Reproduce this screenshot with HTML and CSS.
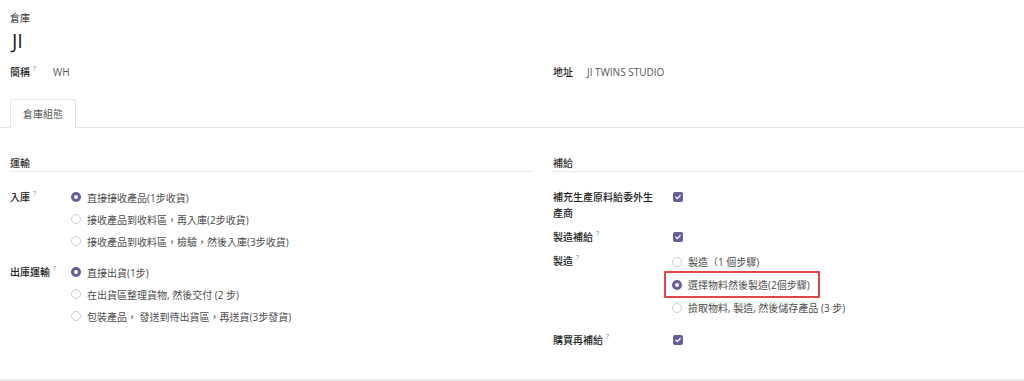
FILE: index.html
```html
<!DOCTYPE html>
<html lang="zh-Hant">
<head>
    <meta charset="UTF-8">
    <meta name="viewport" content="width=device-width, initial-scale=1.0">
    <title>倉庫 JI</title>
    <link rel="stylesheet" href="styles.css">
</head>
<body>
    <div class="sheet">
        <div class="title">
            <div class="title-label">倉庫</div>
            <h1>JI</h1>
        </div>

        <div class="cols top-fields">
            <div class="field short">
                <span class="label">簡稱<sup>?</sup></span>
                <span class="value">WH</span>
            </div>
            <div class="field address">
                <span class="label">地址</span>
                <span class="value">JI TWINS STUDIO</span>
            </div>
        </div>

        <div class="tabs">
            <div class="tab active">倉庫組態</div>
        </div>

        <div class="cols tab-body">
            <div class="group left">
                <div class="group-title">運輸</div>
                <div class="rows">
                    <div class="row">
                        <div class="label">入庫<sup>?</sup></div>
                        <div class="options">
                            <div class="option"><span class="radio checked"></span>直接接收產品(1步收貨)</div>
                            <div class="option"><span class="radio"></span>接收產品到收料區，再入庫(2步收貨)</div>
                            <div class="option"><span class="radio"></span>接收產品到收料區，檢驗，然後入庫(3步收貨)</div>
                        </div>
                    </div>
                    <div class="row">
                        <div class="label">出庫運輸<sup>?</sup></div>
                        <div class="options">
                            <div class="option"><span class="radio checked"></span>直接出貨(1步)</div>
                            <div class="option"><span class="radio"></span>在出貨區整理貨物, 然後交付 (2 步)</div>
                            <div class="option"><span class="radio"></span>包裝產品， 發送到待出貨區，再送貨(3步發貨)</div>
                        </div>
                    </div>
                </div>
            </div>

            <div class="group right">
                <div class="group-title">補給</div>
                <div class="rows">
                    <div class="row">
                        <div class="label">補充生產原料給委外生產商</div>
                        <div class="options">
                            <div class="option"><span class="check"><svg viewBox="0 0 10 10" width="10" height="10"><path d="M2.8 5.2 L4.3 6.6 L7.2 3.5" fill="none" stroke="#fff" stroke-width="1.3" stroke-linecap="round" stroke-linejoin="round"/></svg></span></div>
                        </div>
                    </div>
                    <div class="row">
                        <div class="label">製造補給<sup>?</sup></div>
                        <div class="options">
                            <div class="option"><span class="check"><svg viewBox="0 0 10 10" width="10" height="10"><path d="M2.8 5.2 L4.3 6.6 L7.2 3.5" fill="none" stroke="#fff" stroke-width="1.3" stroke-linecap="round" stroke-linejoin="round"/></svg></span></div>
                        </div>
                    </div>
                    <div class="row">
                        <div class="label">製造<sup>?</sup></div>
                        <div class="options tall">
                            <div class="option"><span class="radio"></span>製造（1 個步驟)</div>
                            <div class="option"><span class="marked"><span class="radio checked"></span>選擇物料然後製造(2個步驟)</span></div>
                            <div class="option"><span class="radio"></span>撿取物料, 製造, 然後儲存產品 (3 步)</div>
                        </div>
                    </div>
                    <div class="row last">
                        <div class="label">購買再補給<sup>?</sup></div>
                        <div class="options">
                            <div class="option"><span class="check"><svg viewBox="0 0 10 10" width="10" height="10"><path d="M2.8 5.2 L4.3 6.6 L7.2 3.5" fill="none" stroke="#fff" stroke-width="1.3" stroke-linecap="round" stroke-linejoin="round"/></svg></span></div>
                        </div>
                    </div>
                </div>
            </div>
        </div>
    </div>
</body>
</html>
```

FILE: styles.css
```css
body {
    margin: 0;
    background-color: #ffffff;
    font-family: 'Open Sans', 'Noto Sans CJK TC', sans-serif;
    font-size: 10px;
    color: #4c4c4c;
}
.sheet {
    padding: 11px 0 28px 10px;
    border-bottom: 2px solid #ececec;
}
.title-label {
    line-height: 14px;
    color: #333333;
}
h1 {
    margin: 3px 0 0 2px;
    font-size: 20px;
    font-weight: 400;
    line-height: 26px;
    color: #222222;
}
.cols {
    display: grid;
    grid-template-columns: 523px 1fr;
    column-gap: 20px;
}
.top-fields {
    margin-top: 10px;
}
.field {
    display: flex;
    line-height: 16px;
}
.field .label {
    color: #222222;
    font-weight: 500;
}
.short .label {
    width: 43px;
}
.address .label {
    width: 34px;
}
.field .value {
    color: #555555;
}
sup {
    font-size: 7px;
    font-weight: 400;
    color: #7d85b3;
    margin-left: 3px;
    vertical-align: 5px;
    line-height: 0;
}
.tabs {
    margin: 19px 0 0 -10px;
    padding-left: 10px;
    border-bottom: 1px solid #e4e4e4;
    display: flex;
}
.tab {
    padding: 0 12px;
    height: 28px;
    line-height: 28px;
    color: #555555;
    border: 1px solid #e4e4e4;
    border-bottom: none;
    border-radius: 3px 3px 0 0;
    background-color: #ffffff;
    margin-bottom: -1px;
}
.tab-body {
    margin-top: 28px;
}
.group-title {
    font-weight: 500;
    color: #333333;
    line-height: 14px;
    padding-bottom: 1px;
    border-bottom: 1px solid #e7e7e7;
}
.rows {
    margin-top: 14px;
    display: flex;
    flex-direction: column;
}
.left .rows {
    gap: 9px;
}
.right .rows {
    gap: 2px;
}
.row {
    display: flex;
}
.row .label {
    color: #222222;
    font-weight: 500;
    line-height: 16px;
    padding: 3px 10px 3px 0;
    box-sizing: border-box;
}
.left .row .label {
    width: 61px;
}
.right .row .label {
    width: 119px;
}
.right .row.last {
    margin-top: 8px;
}
.option {
    display: flex;
    align-items: center;
    height: 22px;
    white-space: nowrap;
}
.options.tall .option {
    height: 23px;
}
.radio {
    width: 10px;
    height: 10px;
    box-sizing: border-box;
    border: 1px solid #cfcfcf;
    border-radius: 50%;
    margin-right: 6px;
    flex-shrink: 0;
}
.radio.checked {
    border: 3px solid #6a5b9f;
}
.check {
    display: inline-flex;
    width: 10px;
    height: 10px;
    border-radius: 2px;
    background-color: #6a5b9f;
    margin-left: 1px;
}
.marked {
    display: inline-flex;
    align-items: center;
    margin-left: -8px;
    padding: 4px 8px 4px 6px;
    border: 2px solid #e04848;
    border-radius: 1px;
}
```
